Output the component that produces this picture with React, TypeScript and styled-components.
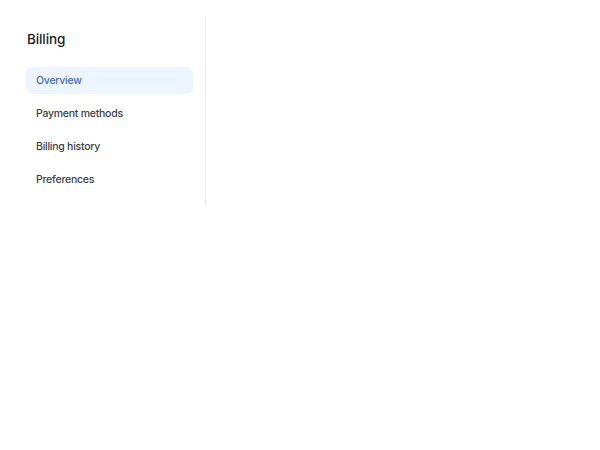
import React, { useState } from "react";
import styled, { createGlobalStyle } from "styled-components";

const Global = createGlobalStyle`
  html, body { margin: 0; padding: 0; background: #ffffff; }
  body { font-family: "Inter", "Open Sans", sans-serif; }
`;

const Page = styled.div`
  display: flex;
  padding: 16px 0 0 14px;
`;

const Sidebar = styled.nav`
  width: 192px;
  box-sizing: border-box;
  padding: 12px 12px 12px 12px;
  border-right: 1px solid #ececef;
  display: flex;
  flex-direction: column;
`;

const Title = styled.h2`
  margin: 0 0 17px 1px;
  font-size: 13.5px;
  line-height: 22px;
  font-weight: 500;
  letter-spacing: -0.1px;
  color: #222226;
`;

const List = styled.ul`
  list-style: none;
  margin: 0;
  padding: 0;
  display: flex;
  flex-direction: column;
  gap: 6px;
`;

const Item = styled.li<{ $active?: boolean }>`
  height: 27px;
  display: flex;
  align-items: center;
  padding: 0 10px;
  border-radius: 6px;
  font-size: 10.5px;
  font-weight: 500;
  letter-spacing: -0.25px;
  cursor: pointer;
  color: ${(p) => (p.$active ? "#3c6fc2" : "#404047")};
  background: ${(p) => (p.$active ? "#eff5fe" : "transparent")};
`;

const items = ["Overview", "Payment methods", "Billing history", "Preferences"];

export default function App() {
  const [active, setActive] = useState(0);
  return (
    <>
      <Global />
      <Page>
        <Sidebar>
          <Title>Billing</Title>
          <List>
            {items.map((t, i) => (
              <Item key={t} $active={i === active} onClick={() => setActive(i)}>
                {t}
              </Item>
            ))}
          </List>
        </Sidebar>
      </Page>
    </>
  );
}
